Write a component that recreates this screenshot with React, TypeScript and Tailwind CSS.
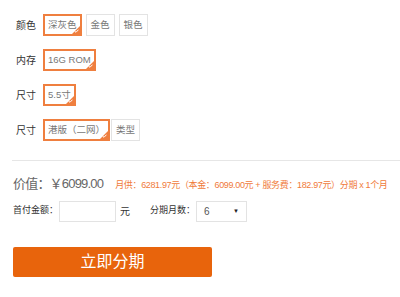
import React from "react";

const font = { fontFamily: '"Liberation Sans", "Noto Sans CJK SC", sans-serif' };

function Option({ label, selected }: { label: string; selected?: boolean }) {
  if (selected) {
    return (
      <div className="relative h-[22px] px-[3px] flex items-center border-2 border-[#ef7f3f] text-[9.5px] text-[#777] bg-white whitespace-nowrap">
        {label}
        <span className="absolute right-0 bottom-0 w-0 h-0 border-l-[8px] border-l-transparent border-b-[8px] border-b-[#ef7f3f]" />
        <svg className="absolute right-[1px] bottom-[1px]" width="5" height="4" viewBox="0 0 5 4">
          <path d="M0.5 2 L2 3.3 L4.5 0.7" stroke="white" strokeWidth="1" fill="none" />
        </svg>
      </div>
    );
  }
  return (
    <div className="h-[22px] px-[4px] flex items-center border border-[#e3e3e3] text-[9.5px] text-[#777] bg-white whitespace-nowrap">
      {label}
    </div>
  );
}

function Row({ label, children }: { label: string; children: React.ReactNode }) {
  return (
    <div className="flex items-center">
      <div className="w-[27px] text-[10px] text-[#333]">{label}</div>
      <div className="flex items-center gap-[4px]">{children}</div>
    </div>
  );
}

export default function App() {
  return (
    <div className="w-[400px] h-[297px] bg-white overflow-hidden" style={font}>
      <div className="pl-[16px] pt-[14px] flex flex-col gap-[13px]">
        <Row label="颜色">
          <Option label="深灰色" selected />
          <Option label="金色" />
          <Option label="银色" />
        </Row>
        <Row label="内存">
          <Option label="16G ROM" selected />
        </Row>
        <Row label="尺寸">
          <Option label="5.5寸" selected />
        </Row>
        <Row label="尺寸">
          <div className="flex items-center gap-[1px]">
            <Option label="港版（二网）" selected />
            <Option label="类型" />
          </div>
        </Row>
      </div>

      <div className="ml-[12px] mt-[19px] border-t border-[#e6e6e6]" />

      <div className="pl-[13px] mt-[13px] flex items-baseline whitespace-nowrap">
        <span className="text-[13px] tracking-[-0.8px] text-[#666]">价值：￥6099.00</span>
        <span className="ml-[12px] text-[9px] tracking-[-0.35px] text-[#f07a3a]">
          月供：6281.97元（本金：6099.00元 + 服务费：182.97元）分期 x 1个月
        </span>
      </div>

      <div className="pl-[13px] mt-[7px] flex items-center text-[9px] text-[#333] whitespace-nowrap">
        <span>首付金额：</span>
        <input className="ml-[1px] w-[57px] h-[21px] border border-[#e3e3e3] outline-none" />
        <span className="ml-[4px] text-[10px]">元</span>
        <span className="ml-[20px]">分期月数：</span>
        <div className="ml-[1px] w-[51px] h-[21px] border border-[#e3e3e3] flex items-center justify-between px-[7px] text-[10px] text-[#555]">
          <span>6</span>
          <span className="text-[6px] text-[#222]">▼</span>
        </div>
      </div>

      <div className="ml-[13px] mt-[25px] w-[199px] h-[30px] rounded-[2px] bg-[#e8640c] flex items-center justify-center text-white text-[16px]">
        立即分期
      </div>
    </div>
  );
}
